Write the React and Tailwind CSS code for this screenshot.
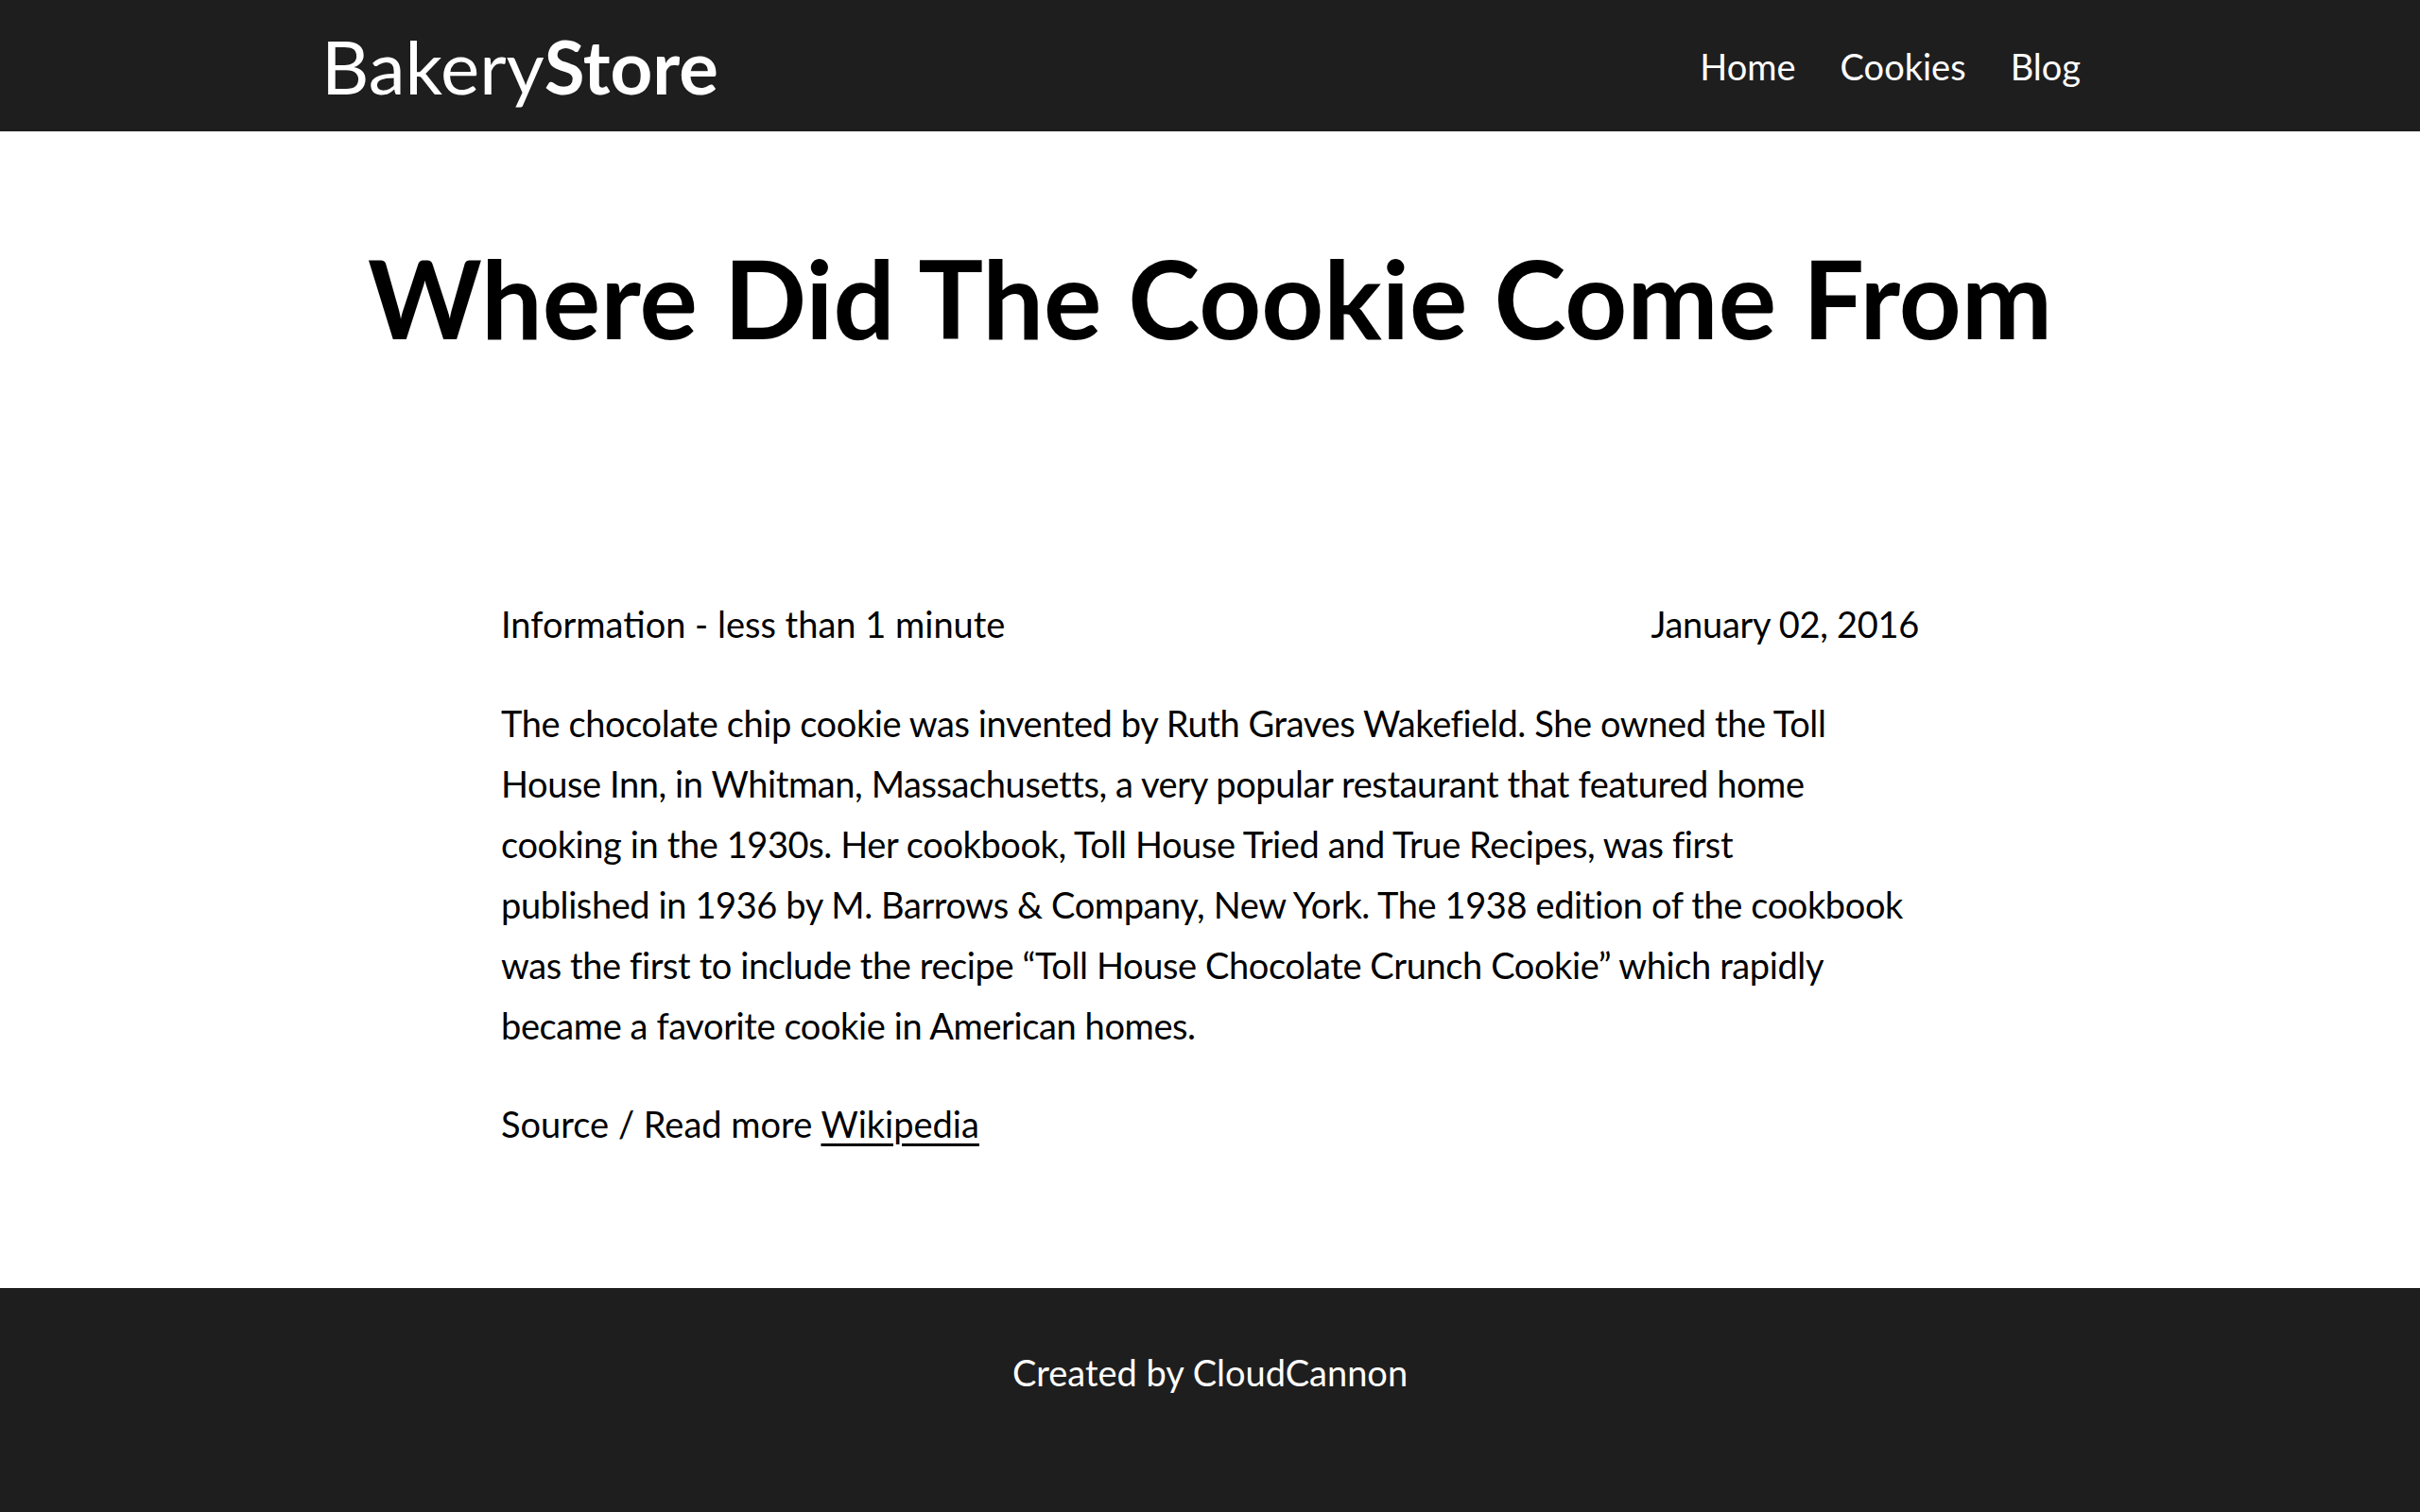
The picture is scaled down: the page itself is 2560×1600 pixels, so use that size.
export default function App() {
  return (
    <div className="w-full bg-white text-black font-['Lato','Noto_Sans',sans-serif]">
      <header className="h-[139px] bg-[#1e1e1e] text-white">
        <div className="mx-auto flex h-full w-[1880px] items-center justify-between">
          <a className="text-[78px] leading-none text-white">
            Bakery<span className="font-bold">Store</span>
          </a>
          <nav className="flex items-center gap-[47px] pr-[19px] text-[38px] leading-none">
            <a>Home</a>
            <a>Cookies</a>
            <a>Blog</a>
          </nav>
        </div>
      </header>
      <main className="pt-[106px] pb-[142px]">
        <h1 className="text-center text-[115px] font-bold leading-[1.2]">
          Where Did The Cookie Come From
        </h1>
        <div className="mx-auto mt-[245px] w-[1500px] text-[38px] leading-[64px]">
          <div className="flex justify-between">
            <span>Information - less than 1 minute</span>
            <span className="tracking-[-0.3px]">January 02, 2016</span>
          </div>
          <p className="mt-[41px] whitespace-nowrap tracking-[-0.4px]">
            The chocolate chip cookie was invented by Ruth Graves Wakefield. She owned the Toll<br />
            House Inn, in Whitman, Massachusetts, a very popular restaurant that featured home<br />
            cooking in the 1930s. Her cookbook, Toll House Tried and True Recipes, was first<br />
            published in 1936 by M. Barrows &amp; Company, New York. The 1938 edition of the cookbook<br />
            was the first to include the recipe “Toll House Chocolate Crunch Cookie” which rapidly<br />
            became a favorite cookie in American homes.
          </p>
          <p className="mt-[40px]">
            Source / Read more <a className="underline decoration-[3px] underline-offset-[6px]">Wikipedia</a>
          </p>
        </div>
      </main>
      <footer className="h-[238px] bg-[#1e1e1e] pt-[57px] text-center text-[38px] leading-[64px] text-white">
        Created by CloudCannon
      </footer>
    </div>
  );
}
